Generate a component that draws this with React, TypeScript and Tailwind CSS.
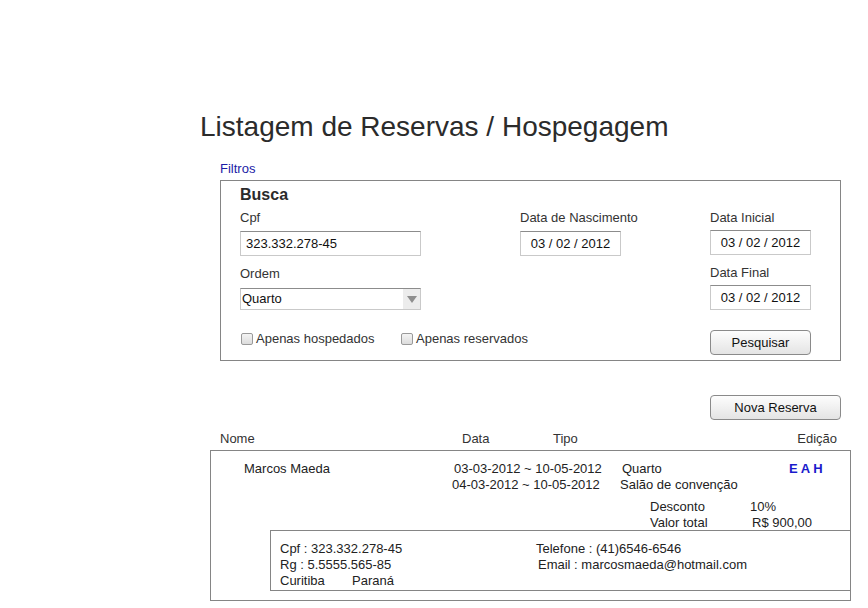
import React from "react";

function TextInput({ value, w, center }: { value: string; w: string; center?: boolean }) {
  return (
    <div
      className={`${w} h-[25px] border border-[#c9c9c9] border-t-[#8c8c8c] bg-white flex items-center text-[13px] leading-[16px] text-[#111] ${center ? "justify-center" : "pl-[5px]"}`}
    >
      {value}
    </div>
  );
}

function Button({ label, w }: { label: string; w: string }) {
  return (
    <div
      className={`${w} h-[25px] rounded-[4px] border border-[#8a8a8a] bg-gradient-to-b from-[#fdfdfd] to-[#e4e4e4] flex items-center justify-center text-[13px] leading-[16px] text-[#111]`}
    >
      {label}
    </div>
  );
}

function Check({ label }: { label: string }) {
  return (
    <div className="flex items-center h-[16px] whitespace-nowrap shrink-0">
      <div className="w-[12px] h-[12px] ml-[1px] rounded-[2px] border border-[#9a9a9a] bg-gradient-to-b from-[#f4f4f4] to-[#dcdcdc]" />
      <span className="ml-[3px]">{label}</span>
    </div>
  );
}

export default function App() {
  return (
    <div className="w-[868px] h-[608px] bg-white text-[#333] font-['Liberation_Sans',Arial,sans-serif] overflow-hidden">
      <div className="ml-[200px] mt-[111px] text-[28px] leading-[32px] text-[#2b2b2b]">
        Listagem de Reservas / Hospegagem
      </div>

      <div className="ml-[220px] mt-[18px] text-[13px] leading-[16px] text-[#1c1ca6]">Filtros</div>

      <div className="ml-[220px] mt-[3px] w-[621px] h-[181px] border border-[#858585] flex text-[13px] leading-[16px]">
        <div className="w-[299px] shrink-0 pl-[19px] pt-[5px] flex flex-col">
          <div className="text-[16px] leading-[18px] font-bold text-[#2b2b2b]">Busca</div>
          <div className="mt-[6px]">Cpf</div>
          <div className="mt-[5px]">
            <TextInput value="323.332.278-45" w="w-[181px]" />
          </div>
          <div className="mt-[10px]">Ordem</div>
          <div className="mt-[6px] w-[181px] h-[22px] border border-[#c9c9c9] border-t-[#8c8c8c] bg-white flex items-center text-[#111]">
            <span className="pl-[1px] flex-1">Quarto</span>
            <div className="w-[17px] h-[20px] bg-[#ececec] flex items-center justify-center">
              <svg width="10" height="7" viewBox="0 0 10 7">
                <path d="M0 0 L10 0 L5 7 Z" fill="#8e8e8e" />
              </svg>
            </div>
          </div>
          <div className="mt-[21px] flex text-[#333] whitespace-nowrap">
            <div className="w-[160px] shrink-0">
              <Check label="Apenas hospedados" />
            </div>
            <Check label="Apenas reservados" />
          </div>
        </div>

        <div className="w-[190px] shrink-0 pt-[29px] flex flex-col">
          <div>Data de Nascimento</div>
          <div className="mt-[5px]">
            <TextInput value="03 / 02 / 2012" w="w-[101px]" center />
          </div>
        </div>

        <div className="w-[101px] shrink-0 pt-[29px] flex flex-col">
          <div>Data Inicial</div>
          <div className="mt-[4px]">
            <TextInput value="03 / 02 / 2012" w="w-[101px]" center />
          </div>
          <div className="mt-[10px]">Data Final</div>
          <div className="mt-[4px]">
            <TextInput value="03 / 02 / 2012" w="w-[101px]" center />
          </div>
          <div className="mt-[20px]">
            <Button label="Pesquisar" w="w-[101px]" />
          </div>
        </div>
      </div>

      <div className="ml-[220px] w-[621px] flex justify-end mt-[34px]">
        <Button label="Nova Reserva" w="w-[131px]" />
      </div>

      <div className="ml-[220px] w-[620px] mt-[11px] flex text-[13px] leading-[16px] text-[#333]">
        <div className="w-[242px]">Nome</div>
        <div className="w-[91px]">Data</div>
        <div className="flex-1">Tipo</div>
        <div className="pr-[3px]">Edição</div>
      </div>

      <div className="ml-[210px] mt-[3px] w-[641px] h-[151px] border border-[#858585] text-[13px] leading-[16px] text-[#222]">
        <div className="pt-[10px] flex">
          <div className="pl-[33px] w-[243px]">Marcos Maeda</div>
          <div className="w-[168px]">03-03-2012 ~ 10-05-2012</div>
          <div className="w-[167px]">Quarto</div>
          <div className="font-bold text-[#1a1acc]">E A H</div>
        </div>
        <div className="flex">
          <div className="w-[241px]" />
          <div className="w-[168px]">04-03-2012 ~ 10-05-2012</div>
          <div>Salão de convenção</div>
        </div>
        <div className="mt-[6px] flex">
          <div className="w-[439px]" />
          <div className="w-[100px]">Desconto</div>
          <div>10%</div>
        </div>
        <div className="flex">
          <div className="w-[439px]" />
          <div className="w-[102px]">Valor total</div>
          <div>R$ 900,00</div>
        </div>
        <div className="-mt-[1px] ml-[59px] h-[61px] border-t border-l border-b border-[#858585] pl-[9px] pt-[10px]">
          <div className="flex">
            <div className="w-[256px]">Cpf : 323.332.278-45</div>
            <div>Telefone : (41)6546-6546</div>
          </div>
          <div className="flex">
            <div className="w-[258px]">Rg : 5.5555.565-85</div>
            <div>Email : marcosmaeda@hotmail.com</div>
          </div>
          <div className="flex">
            <div className="w-[72px]">Curitiba</div>
            <div>Paraná</div>
          </div>
        </div>
      </div>
    </div>
  );
}
